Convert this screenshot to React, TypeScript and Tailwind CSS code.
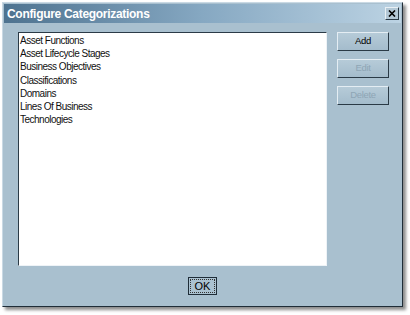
export default function App() {
  const items = [
    "Asset Functions",
    "Asset Lifecycle Stages",
    "Business Objectives",
    "Classifications",
    "Domains",
    "Lines Of Business",
    "Technologies",
  ];
  const buttons = [
    { label: "Add", enabled: true },
    { label: "Edit", enabled: false },
    { label: "Delete", enabled: false },
  ];
  return (
    <div className="w-[410px] h-[315px] bg-white pt-[2px] pl-[2px] font-['Liberation_Sans',Arial,sans-serif]">
      <div className="w-[401px] h-[305px] flex flex-col bg-[#a9c0cf] border border-[#c9d9e4] border-r-[#1f2d38] border-b-[#1f2d38] shadow-[3px_3px_3px_rgba(0,0,0,0.45)]">
        <div className="h-[19px] mx-[1px] mt-[1px] flex items-center justify-between pl-[3px] pr-[2px] bg-gradient-to-r from-[#4e7390] via-[#86a8c2] to-[#bcd3e3]">
          <span className="text-white text-[12px] font-bold tracking-[-0.3px]">Configure Categorizations</span>
          <div className="w-[14px] h-[13px] flex items-center justify-center bg-[#b3c8d6] border border-[#e8f0f5] border-r-[#2a3a46] border-b-[#2a3a46]">
            <svg width="8" height="7" viewBox="0 0 8 7">
              <path d="M1 0.5 L7 6.5 M7 0.5 L1 6.5" stroke="#000" strokeWidth="1.6" />
            </svg>
          </div>
        </div>
        <div className="flex-1 flex flex-col pl-[15px] pr-[13px] pt-[9px] pb-[11px]">
          <div className="flex gap-[9px]">
            <div className="w-[311px] h-[234px] bg-white border border-[#eef3f7] border-l-[#2b3b47] border-t-[#2b3b47] pl-[1px] pt-[1px]">
              {items.map((item) => (
                <div key={item} className="h-[13.2px] leading-[13px] text-[10px] text-[#111] tracking-[-0.5px]">
                  {item}
                </div>
              ))}
            </div>
            <div className="flex flex-col gap-[8px] pl-[1px]">
              {buttons.map((b) => (
                <div
                  key={b.label}
                  className={`w-[52px] h-[19px] flex items-center justify-center text-[9.5px] tracking-[-0.3px] border border-[#e4edf3] border-r-[#2a3a46] border-b-[#2a3a46] bg-gradient-to-b from-[#b6cbd8] to-[#a4bccc] ${
                    b.enabled ? "text-black" : "text-[#8ea5b5]"
                  }`}
                >
                  {b.label}
                </div>
              ))}
            </div>
          </div>
          <div className="flex justify-center mt-[11px] pr-[2px]">
            <div className="w-[29px] h-[18px] border border-[#1f2d38] bg-[#abc2d1] p-[1px]">
              <div className="w-full h-full border border-dotted border-[#333] flex items-center justify-center text-[11px] text-black">
                OK
              </div>
            </div>
          </div>
        </div>
      </div>
    </div>
  );
}
